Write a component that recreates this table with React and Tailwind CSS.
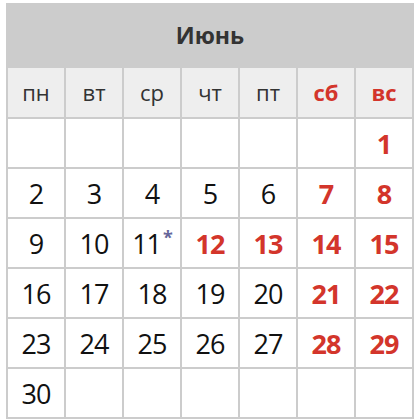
import React from 'react';

const dayNames = ['пн', 'вт', 'ср', 'чт', 'пт', 'сб', 'вс'];

// June starts on Sunday -> 6 blanks
const cells = [...Array(6).fill(null), ...Array.from({ length: 30 }, (_, i) => i + 1)];
while (cells.length % 7) cells.push(null);

const holidays = [12, 13];

const Cell = ({ day, index }) => {
  const col = index % 7;
  const red = day && (col >= 5 || holidays.includes(day));
  return (
    <div className="bg-white h-[48px] flex items-center justify-center">
      {day && (
        <span
          className={`relative text-[27px] tracking-[-1px] leading-none ${red ? 'font-bold text-[#d3352b]' : 'text-[#111]'}`}
        >
          {day}
          {day === 11 && (
            <span className="inline-block align-top text-[18px] leading-none text-[#666699] font-bold ml-[2px] -mt-[2px]">*</span>
          )}
        </span>
      )}
    </div>
  );
};

export default function App() {
  return (
    <div className="w-[420px] h-[420px] bg-white pt-[3px] pl-[6px]" style={{ fontFamily: '"Open Sans", sans-serif' }}>
      <div className="w-[408px] bg-[#cccccc]">
        <div className="h-[65px] flex items-center justify-center text-[23px] font-bold text-[#333]">
          Июнь
        </div>
        <div className="grid grid-cols-7 gap-[2px] px-[2px] pb-[2px]">
          {dayNames.map((d, i) => (
            <div
              key={d}
              className={`bg-[#eeeeee] h-[49px] flex items-center justify-center text-[22px] ${i >= 5 ? 'font-bold text-[#d3352b]' : 'text-[#333]'}`}
            >
              {d}
            </div>
          ))}
          {cells.map((day, i) => (
            <Cell key={i} day={day} index={i} />
          ))}
        </div>
      </div>
    </div>
  );
}
